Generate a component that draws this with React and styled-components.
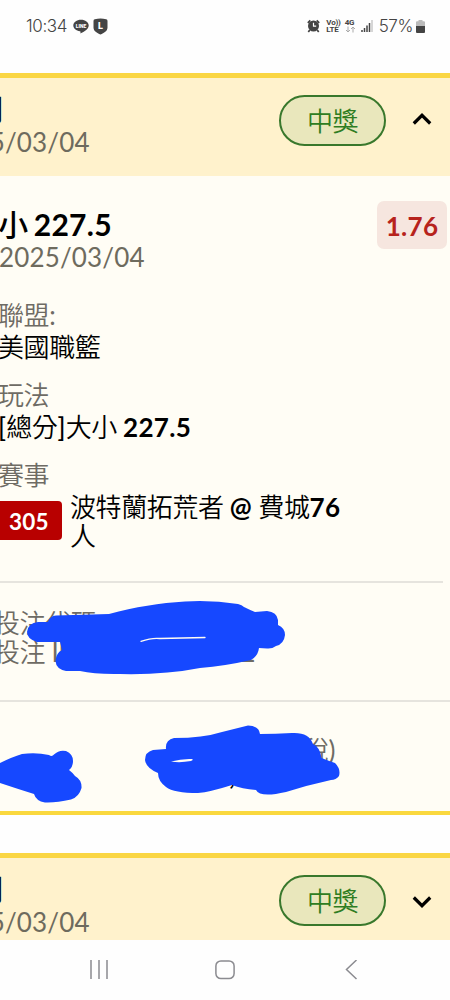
import React from 'react'
import styled, { createGlobalStyle } from 'styled-components'

const App = () => {
  return (
    <>
      <GlobalStyle />
      <Screen>
        <StatusBar />
        <Content>
          <BetCard>
            <BetHeader open />
            <BetBody />
          </BetCard>
          <NextCard>
            <BetHeader />
          </NextCard>
        </Content>
        <NavBar />
      </Screen>
    </>
  )
}

export default App

const StatusBar = () => (
  <StatusRow>
    <StatusGroup>
      <StatusText>10:34</StatusText>
      <svg width="16" height="15" viewBox="0 0 16 15">
        <path d="M8 .8C3.700.8.3 3.300.3 6.500c0 2.900 2.900 5.200 6.600 5.700.5.1.7.5.6 1.100l-.1 1.200c1.700-.7 8.300-3.900 8.300-8C15.700 3.300 12.300.8 8 .8z" fill="#444" />
        <text x="8" y="8.500" textAnchor="middle" fontSize="5" fontWeight="900" fontFamily="Roboto, sans-serif" fill="#fff">LINE</text>
      </svg>
      <ShieldIcon width="15" height="17" viewBox="0 0 15 17">
        <path d="M1.800 1.200Q7.500-.2 13.200 1.200Q14.500 1.500 14.500 3V9.500C14.500 13 11 15.200 7.500 16.400C4 15.200.5 13 .5 9.500V3Q.5 1.500 1.800 1.200z" fill="#444" />
        <text x="7.500" y="11.300" textAnchor="middle" fontSize="9" fontWeight="900" fontFamily="Roboto, sans-serif" fill="#fff">L</text>
      </ShieldIcon>
    </StatusGroup>
    <StatusGroup $right>
      <svg width="13" height="14" viewBox="0 0 13 14">
        <circle cx="6.500" cy="7" r="5.500" fill="#444" />
        <path d="M.8 3.800L3.300 1.300M12.200 3.800L9.700 1.300M2.800 11L1.300 13M10.200 11L11.700 13" stroke="#444" strokeWidth="1.700" />
        <path d="M6.500 3.800V7.200H9.200" stroke="#fff" strokeWidth="1.200" fill="none" />
      </svg>
      <Tiny $gap={6}>
        <span>Vo))</span>
        <span>LTE</span>
      </Tiny>
      <Tiny $gap={4}>
        <span>4G</span>
        <svg width="11" height="7" viewBox="0 0 11 7">
          <path d="M3 .5V6M1 4L3 6L5 4M8 6.500V1M6 3L8 1L10 3" stroke="#aaa" fill="none" />
        </svg>
      </Tiny>
      <Signal width="12" height="12" viewBox="0 0 12 12">
        <path d="M1 10V12M3.500 8V12M6 5.500V12M8.500 3V12" stroke="#444" strokeWidth="1.500" />
        <path d="M11 0V12" stroke="#bbb" strokeWidth="1.200" />
      </Signal>
      <StatusText>57%</StatusText>
      <Battery width="9" height="13" viewBox="0 0 9 13">
        <path d="M2.500 0H6.500V1.200H8Q9 1.200 9 2.200V6H0V2.200Q0 1.200 1 1.200H2.500z" fill="#bbb" />
        <path d="M0 6H9V12Q9 13 8 13H1Q0 13 0 12z" fill="#444" />
      </Battery>
    </StatusGroup>
  </StatusRow>
)

const BetHeader = ({ open }) => (
  <HeaderRow>
    <HeaderText>
      <HeaderTitle>單關</HeaderTitle>
      <DateText>2025/03/04</DateText>
    </HeaderText>
    <Pill>中獎</Pill>
    <Chevron $open={open} width="20" height="14" viewBox="0 0 20 14">
      <path d={open ? 'M1.800 11.500L10 3.300L18.200 11.500' : 'M1.800 2.500L10 10.700L18.200 2.500'} fill="none" stroke="#000" strokeWidth="3.200" />
    </Chevron>
  </HeaderRow>
)

const BetBody = () => (
  <Body>
    <TopRow>
      <div>
        <BetTitle>大小 227.5</BetTitle>
        <DateText>2025/03/04</DateText>
      </div>
      <Odds>1.76</Odds>
    </TopRow>
    <Field>
      <Label>聯盟:</Label>
      <Value>美國職籃</Value>
    </Field>
    <Field>
      <Label>玩法</Label>
      <Value><Bracket>[</Bracket>總分<Bracket>]</Bracket>大小 <Strong>227.5</Strong></Value>
    </Field>
    <Field>
      <Label>賽事</Label>
      <Match>
        <MatchNo>305</MatchNo>
        <Teams>波特蘭拓荒者 <Strong>@</Strong> 費城<Strong>76</Strong>人</Teams>
      </Match>
    </Field>
    <Codes>
      <CodeLine>投注代碼</CodeLine>
      <CodeLine>
        <span>投注 ID</span>
        <span>2</span>
      </CodeLine>
      <CodeScribble width="264" height="80" viewBox="24 598 264 80">
        <path
          d="M38 622H48Q50 616 56 615.500L109 614C135 607 160 603 185 601.500Q212 600 238 604Q242 605 244 607Q250 610 255 612L267 611Q277 612 278 620V625Q285 628 285 635Q284 644 276 646Q272 649 267 648.500L259 648Q258 656 251 660Q225 666 200 668Q165 675 120 674Q95 674.500 80 671H66Q56 669 55.500 661Q56 653 62 650L60 642H37Q27 639 27 632Q28 623 38 622z"
          fill="#1648ff"
        />
        <path d="M141 641.300Q152 637.500 160 638.500L205 637.500" stroke="#fffdf3" strokeWidth="1.300" fill="none" strokeLinecap="round" />
      </CodeScribble>
    </Codes>
    <Amounts>
      <Tax>(含稅)</Tax>
      <Comma>,</Comma>
      <AmountScribble width="344" height="84" viewBox="0 722 344 84">
        <path
          d="M0 763Q12 757 22 754Q36 752 49 755Q52 757 54 754.500Q59 749.500 66 751Q73 754 73 761Q73 767 69 770Q73 773 75 776Q82 780 81.500 788Q79 797 71 799.500Q56 803 45 802.500Q36 801 34 794Q18 789 0 783z"
          fill="#1648ff"
        />
        <path
          fillRule="evenodd"
          d="M153 750L166 749Q165 740 174 738Q203 738 222 732L248 725.500Q259 726 260 734Q275 734 292 733Q309 732 313 744Q320 747 321.500 758Q329 761 335 763Q341 769 339 776Q336 780 331 780Q308 785 286 792Q260 798 256 790Q242 789 232 785Q210 792 198 793Q174 793 166 787Q158 781 158 773Q146 768 145 760Q145 752 153 750zM171 761.500Q180 763 191 761Q194 760 192 759Q182 758.500 171 761.500z"
          fill="#1648ff"
        />
      </AmountScribble>
    </Amounts>
  </Body>
)

const NavBar = () => (
  <Nav>
    <svg width="20" height="20" viewBox="0 0 20 20">
      <path d="M2 0V19M10 0V19M18 0V19" stroke="#8b8b90" strokeWidth="1.500" />
    </svg>
    <svg width="20" height="20" viewBox="0 0 20 20">
      <rect x=".9" y=".9" width="18.200" height="17.700" rx="5" fill="none" stroke="#8b8b90" strokeWidth="1.500" />
    </svg>
    <svg width="20" height="20" viewBox="0 0 20 20">
      <path d="M15.500 0L5.500 9.500L15.500 19" fill="none" stroke="#8b8b90" strokeWidth="1.500" />
    </svg>
  </Nav>
)

const GlobalStyle = createGlobalStyle`
  * {
    box-sizing: border-box;
  }
  body {
    margin: 0;
    background: #fff;
  }
`;

const Screen = styled.div`
  display: flex;
  flex-direction: column;
  width: 450px;
  height: 1000px;
  overflow: hidden;
  background: #fefefe;
  font-family: Lato, "Noto Sans CJK TC DemiLight", "Noto Sans CJK TC", sans-serif;
  font-size: 26px;
  line-height: 32px;
  white-space: nowrap;
`;

const StatusRow = styled.div`
  flex: none;
  display: flex;
  justify-content: space-between;
  height: 73px;
  padding: 15px 25px 0 26px;
  font-family: Roboto, sans-serif;
  color: #444;
`;

const StatusGroup = styled.div`
  display: flex;
  align-items: center;
  height: 22px;
  gap: ${(props) => props.$right ? "0" : "6px"};
`;

const StatusText = styled.span`
  font-family: Inter, sans-serif;
  font-size: 17px;
  font-weight: 300;
  letter-spacing: -0.4px;
  line-height: 22px;
`;

const ShieldIcon = styled.svg`
  margin-left: -2px;
`;

const Tiny = styled.div`
  display: flex;
  flex-direction: column;
  margin-left: ${(props) => props.$gap}px;
  font-size: 8px;
  font-weight: 700;
  line-height: 7px;
  letter-spacing: -0.2px;
`;

const Signal = styled.svg`
  margin: 0 6px 0 5px;
`;

const Battery = styled.svg`
  margin-left: 3px;
`;

const Content = styled.div`
  flex: none;
  height: 867px;
  overflow: hidden;
`;

const BetCard = styled.div`
  height: 742px;
  border-top: 5px solid #fad643;
  border-bottom: 4px solid #fad83e;
  background: #fffdf5;
`;

const NextCard = styled(BetCard)`
  margin-top: 38px;
`;

const HeaderRow = styled.div`
  display: flex;
  align-items: flex-start;
  height: 98px;
  padding-top: 17px;
  background: #fff2cc;
`;

const HeaderText = styled.div`
  width: 335px;
  margin-left: -56px;
  color: #6e674c;
`;

const HeaderTitle = styled.div`
  font-family: Lato, "Noto Sans CJK TC", sans-serif;
  font-size: 29px;
  font-weight: 700;
  line-height: 30px;
  height: 31px;
  letter-spacing: 1px;
  color: #000;
`;

const DateText = styled.div`
  line-height: 32px;
  letter-spacing: 0.15px;
  color: #6e6b5e;
`;

const Pill = styled.div`
  width: 107px;
  height: 51px;
  border: 2px solid #39782c;
  border-radius: 26px;
  background: #e9e7bc;
  color: #2f7d22;
  text-align: center;
  line-height: 48px;
  letter-spacing: -0.4px;
`;

const Chevron = styled.svg`
  margin: ${(props) => props.$open ? "17px" : "20px"} 0 0 26px;
`;

const Body = styled.div`
  padding-top: 25px;
`;

const TopRow = styled.div`
  display: flex;
  justify-content: space-between;
  height: 98px;
  padding-right: 3px;
  margin-left: -1px;
`;

const BetTitle = styled.div`
  height: 40px;
  margin-left: -31px;
  padding-top: 5px;
  font-family: Lato, "Noto Sans CJK TC Medium", "Noto Sans CJK TC", sans-serif;
  font-size: 30px;
  font-weight: 700;
  line-height: 36px;
  letter-spacing: 0.3px;
  word-spacing: -2.5px;
`;

const Odds = styled.div`
  width: 70px;
  height: 48px;
  border-radius: 7px;
  background: #f6e6df;
  color: #b7231c;
  font-weight: 700;
  line-height: 50px;
  letter-spacing: 0.3px;
  text-align: center;
`;

const Field = styled.div`
  height: 80px;
  margin-left: -2px;
  letter-spacing: -0.4px;
`;

const Strong = styled.b`
  font-weight: 700;
  letter-spacing: 0.3px;
`;

const Bracket = styled.span`
  font-weight: 500;
  letter-spacing: 0.2px;
`;

const Label = styled.div`
  color: #6e6b64;
`;

const Value = styled.div`
  color: #000;
`;

const Match = styled.div`
  display: flex;
  align-items: flex-start;
  gap: 8px;
`;

const MatchNo = styled.div`
  width: 72px;
  height: 39px;
  margin: 10px 0 0 -8px;
  padding-left: 19px;
  border-radius: 4px;
  background: #b80000;
  color: #fff;
  font-size: 22.5px;
  font-weight: 700;
  line-height: 41px;
  letter-spacing: 0.2px;
`;

const Teams = styled.div`
  width: 285px;
  padding-top: 2px;
  line-height: 29px;
  white-space: normal;
  word-break: break-all;
`;

const Codes = styled.div`
  position: relative;
  height: 119px;
  margin: 42px 7px 0 0;
  padding-top: 26px;
  border-top: 2px solid #e6e4de;
`;

const CodeLine = styled.div`
  display: flex;
  justify-content: space-between;
  width: 261px;
  margin-left: -6px;
  line-height: 29px;
  letter-spacing: -0.4px;
  color: #6e6b64;
`;

const CodeScribble = styled.svg`
  position: absolute;
  left: 24px;
  top: 15px;
`;

const Amounts = styled.div`
  position: relative;
  height: 110px;
  border-top: 2px solid #e6e4de;
`;

const Tax = styled.div`
  width: 335px;
  padding-top: 32px;
  text-align: right;
  letter-spacing: -0.4px;
  color: #6e6b64;
`;

const Comma = styled.div`
  margin-left: 229px;
  font-weight: 700;
  line-height: 18px;
`;

const AmountScribble = styled.svg`
  position: absolute;
  left: 0;
  top: 20px;
`;

const Nav = styled.div`
  flex: none;
  display: flex;
  justify-content: space-between;
  align-items: center;
  height: 60px;
  padding: 0 89px 0 89px;
`;
